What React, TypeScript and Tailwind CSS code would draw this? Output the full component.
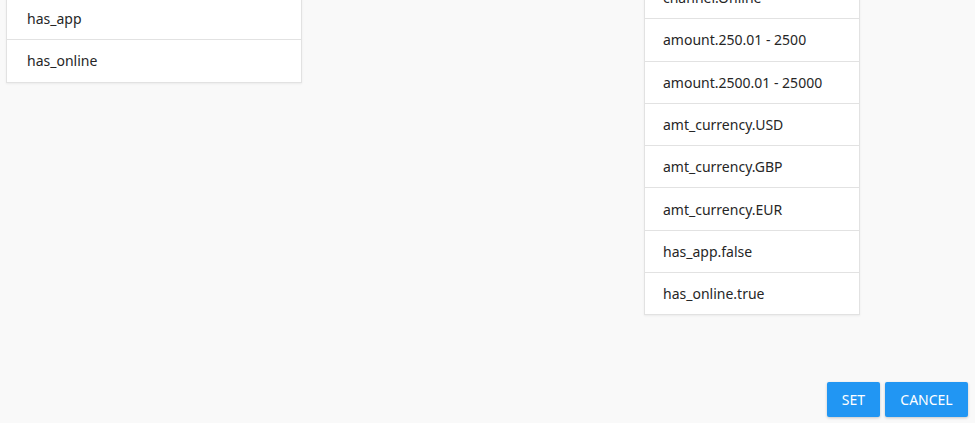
import React from 'react';

// the panel is scrolled: rows above these sit out of view
const leftItems = ['has_app', 'has_online'];
const rightItems = [
  'channel.Online',
  'amount.250.01 - 2500',
  'amount.2500.01 - 25000',
  'amt_currency.USD',
  'amt_currency.GBP',
  'amt_currency.EUR',
  'has_app.false',
  'has_online.true',
];

const ListBox: React.FC<{ items: string[]; className: string; padClass: string }> = ({ items, className, padClass }) => (
  <div className={`bg-white border border-[#e2e2e2] shadow-[0_1px_2px_rgba(0,0,0,0.06)] ${className}`}>
    {items.map((item, i) => (
      <div
        key={item}
        className={`h-[42.3px] flex items-center ${padClass} text-[14px] text-[#262626] ${i > 0 ? 'border-t border-[#e2e2e2]' : ''}`}
      >
        {item}
      </div>
    ))}
  </div>
);

export default function App() {
  return (
    <div className="w-[975px] h-[441px] bg-white overflow-hidden" style={{ fontFamily: '"Noto Sans", "Open Sans", sans-serif' }}>
      <div className="h-[423px] bg-[#f9f9f9] flex flex-col">
        {/* scrolled content */}
        <div className="flex-1 overflow-hidden flex items-start">
          <ListBox items={leftItems} className="ml-[6px] w-[296px] -mt-[4px]" padClass="px-[20px]" />
          <ListBox items={rightItems} className="ml-[342px] w-[216px] -mt-[25px]" padClass="px-[18px]" />
        </div>

        {/* footer buttons */}
        <div className="flex justify-end gap-[5px] pr-[7px] pb-[6px]">
          <button className="h-[35px] w-[53px] bg-[#2196f3] text-white text-[14px] rounded-[2px] shadow-[0_1px_3px_rgba(0,0,0,0.2)]">
            SET
          </button>
          <button className="h-[35px] w-[83px] bg-[#2196f3] text-white text-[14px] rounded-[2px] shadow-[0_1px_3px_rgba(0,0,0,0.2)]">
            CANCEL
          </button>
        </div>
      </div>
    </div>
  );
}
